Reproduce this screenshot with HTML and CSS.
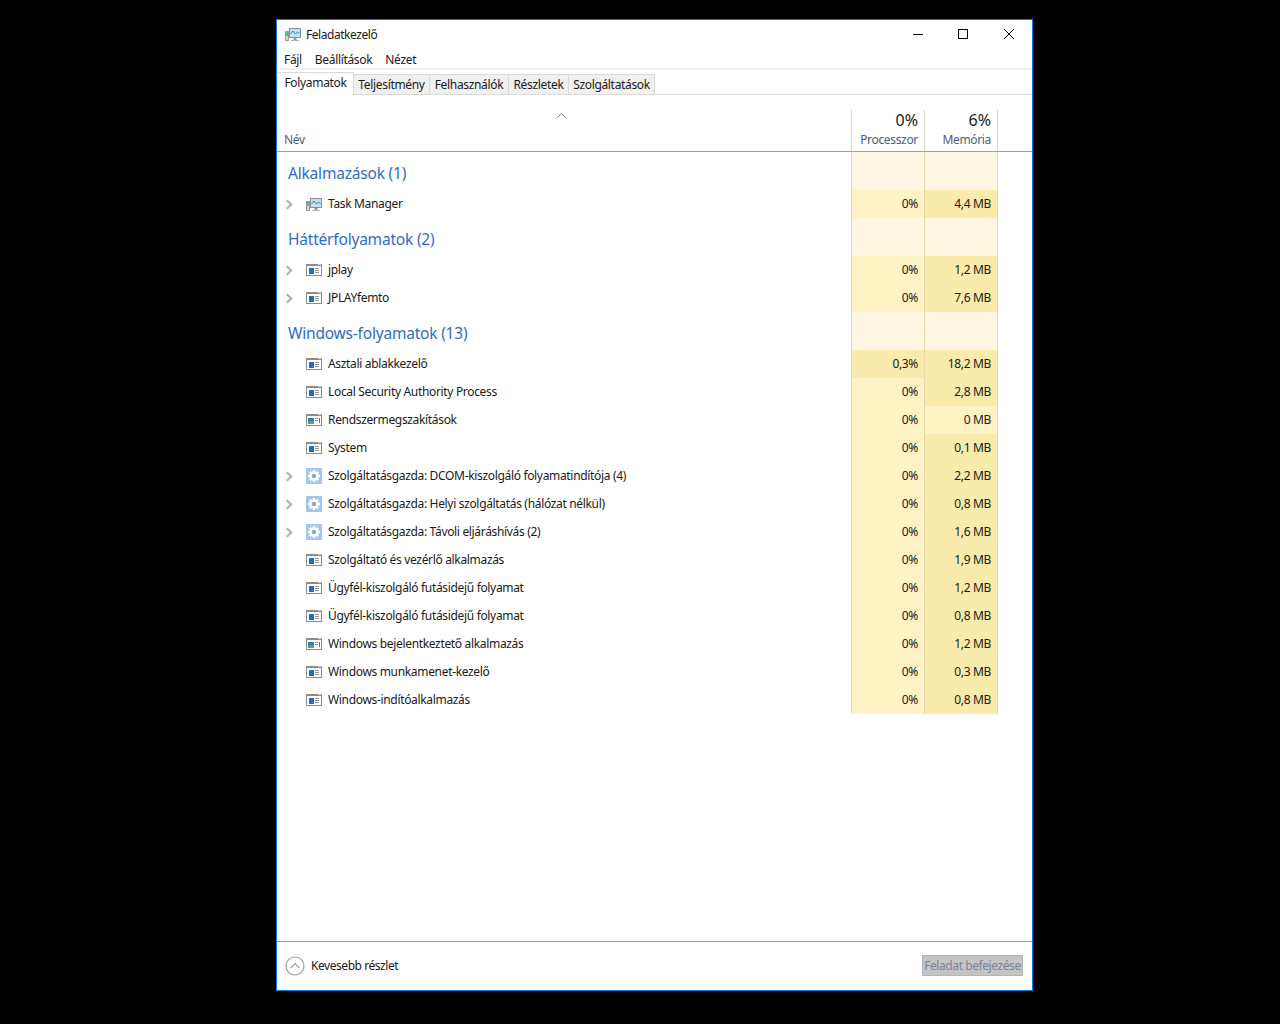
FILE: index.html
```html
<!DOCTYPE html>
<html lang="hu">
<head>
<meta charset="utf-8">
<title>Feladatkezelő</title>
<link rel="stylesheet" href="styles.css">
</head>
<body>
<svg class="defs" width="0" height="0" aria-hidden="true">
  <symbol id="i-proc" viewBox="0 0 16 12">
    <rect x="0" y="0" width="16" height="12" fill="#8c8c8c"/>
    <rect x="1" y="2" width="14" height="9" fill="#fff"/>
    <rect x="3" y="4" width="5" height="6" fill="#1e6fc4"/>
    <rect x="9" y="4" width="4" height="1" fill="#9a9a9a"/>
    <rect x="9" y="6" width="4" height="1" fill="#9a9a9a"/>
    <rect x="9" y="8" width="4" height="1" fill="#9a9a9a"/>
    <rect x="12" y="0" width="3" height="1" fill="#d8d8d8"/>
  </symbol>
  <symbol id="i-sys" viewBox="0 0 16 12">
    <rect x="0" y="0" width="16" height="12" fill="#8c8c8c"/>
    <rect x="1" y="2" width="14" height="9" fill="#fff"/>
    <rect x="2" y="4" width="6" height="3" fill="#2a7fb8"/>
    <rect x="2" y="7" width="6" height="3" fill="#4da87a"/>
    <rect x="9" y="4" width="3" height="1" fill="#9a9a9a"/>
    <rect x="9" y="6" width="3" height="1" fill="#9a9a9a"/>
    <rect x="13" y="4" width="1" height="5" fill="#3a8a5a"/>
    <rect x="12" y="0" width="3" height="1" fill="#d8d8d8"/>
  </symbol>
  <symbol id="i-gear" viewBox="0 0 16 16">
    <rect width="16" height="16" fill="#a3c8ee"/>
    <path d="M8 2v12M2 8h12M3.8 3.8l8.4 8.4M12.2 3.8l-8.4 8.4" stroke="#fff" stroke-width="2.4"/>
    <circle cx="8" cy="8" r="4.6" fill="#fff"/>
    <circle cx="8" cy="8" r="2.2" fill="#7aa8da"/>
  </symbol>
  <symbol id="i-tm" viewBox="0 0 16 16">
    <rect x="0" y="5" width="4" height="10" fill="#9a9a9a"/>
    <rect x="1" y="6" width="2" height="3" fill="#46c46a"/>
    <rect x="1" y="10" width="2" height="4" fill="#d6d6d6"/>
    <rect x="4.5" y="2.5" width="11" height="9" fill="#c4e0f6" stroke="#8f8f8f"/>
    <path d="M5.5 8l2.5-3 2.5 3 2-2 2 1.5" fill="none" stroke="#2a86d4"/>
    <rect x="8.5" y="12" width="3" height="2" fill="#9a9a9a"/>
    <rect x="6" y="14" width="8" height="1" fill="#b4b4b4"/>
  </symbol>
</svg>

<main class="window">
  <header class="titlebar">
    <svg class="app-icon"><use href="#i-tm"/></svg>
    <span class="title">Feladatkezelő</span>
    <div class="controls">
      <svg class="ctl" viewBox="0 0 46 26"><path d="M19 13.5h10" stroke="#000" fill="none"/></svg>
      <svg class="ctl" viewBox="0 0 46 26"><rect x="18.5" y="8.5" width="9" height="9" stroke="#000" fill="none"/></svg>
      <svg class="ctl" viewBox="0 0 46 26"><path d="M18 8l10 10M28 8L18 18" stroke="#000" fill="none"/></svg>
    </div>
  </header>
  <nav class="menubar"><span>Fájl</span><span>Beállítások</span><span>Nézet</span></nav>
  <div class="tabs">
    <span class="tab tab-active">Folyamatok</span>
    <span class="tab t2">Teljesítmény</span>
    <span class="tab t3">Felhasználók</span>
    <span class="tab t4">Részletek</span>
    <span class="tab t5">Szolgáltatások</span>
  </div>

  <div class="table">
    <div class="head">
      <div class="head-name">
        <svg class="sort" viewBox="0 0 9 5"><path d="M.5 4.5l4-4 4 4" fill="none" stroke="#7a7a7a"/></svg>
        <span class="label">Név</span>
      </div>
      <div class="head-col"><span class="pct">0%</span><span class="label">Processzor</span></div>
      <div class="head-col"><span class="pct">6%</span><span class="label">Memória</span></div>
    </div>

    <div class="row group"><div class="name">Alkalmazások (1)</div><div class="cell"></div><div class="cell"></div></div>
    <div class="row"><div class="name"><i class="chev"></i><svg class="ico16"><use href="#i-tm"/></svg><span>Task Manager</span></div><div class="cell h1">0%</div><div class="cell h2">4,4 MB</div></div>

    <div class="row group"><div class="name">Háttérfolyamatok (2)</div><div class="cell"></div><div class="cell"></div></div>
    <div class="row"><div class="name"><i class="chev"></i><svg class="ico"><use href="#i-proc"/></svg><span>jplay</span></div><div class="cell h1">0%</div><div class="cell h2">1,2 MB</div></div>
    <div class="row"><div class="name"><i class="chev"></i><svg class="ico"><use href="#i-proc"/></svg><span>JPLAYfemto</span></div><div class="cell h1">0%</div><div class="cell h2">7,6 MB</div></div>

    <div class="row group"><div class="name">Windows-folyamatok (13)</div><div class="cell"></div><div class="cell"></div></div>
    <div class="row"><div class="name"><i class="nochev"></i><svg class="ico"><use href="#i-proc"/></svg><span>Asztali ablakkezelő</span></div><div class="cell h2">0,3%</div><div class="cell h2">18,2 MB</div></div>
    <div class="row"><div class="name"><i class="nochev"></i><svg class="ico"><use href="#i-proc"/></svg><span>Local Security Authority Process</span></div><div class="cell h1">0%</div><div class="cell h2">2,8 MB</div></div>
    <div class="row"><div class="name"><i class="nochev"></i><svg class="ico"><use href="#i-sys"/></svg><span>Rendszermegszakítások</span></div><div class="cell h1">0%</div><div class="cell h1">0 MB</div></div>
    <div class="row"><div class="name"><i class="nochev"></i><svg class="ico"><use href="#i-proc"/></svg><span>System</span></div><div class="cell h1">0%</div><div class="cell h2">0,1 MB</div></div>
    <div class="row"><div class="name"><i class="chev"></i><svg class="ico16"><use href="#i-gear"/></svg><span>Szolgáltatásgazda: DCOM-kiszolgáló folyamatindítója (4)</span></div><div class="cell h1">0%</div><div class="cell h2">2,2 MB</div></div>
    <div class="row"><div class="name"><i class="chev"></i><svg class="ico16"><use href="#i-gear"/></svg><span>Szolgáltatásgazda: Helyi szolgáltatás (hálózat nélkül)</span></div><div class="cell h1">0%</div><div class="cell h2">0,8 MB</div></div>
    <div class="row"><div class="name"><i class="chev"></i><svg class="ico16"><use href="#i-gear"/></svg><span>Szolgáltatásgazda: Távoli eljáráshívás (2)</span></div><div class="cell h1">0%</div><div class="cell h2">1,6 MB</div></div>
    <div class="row"><div class="name"><i class="nochev"></i><svg class="ico"><use href="#i-proc"/></svg><span>Szolgáltató és vezérlő alkalmazás</span></div><div class="cell h1">0%</div><div class="cell h2">1,9 MB</div></div>
    <div class="row"><div class="name"><i class="nochev"></i><svg class="ico"><use href="#i-proc"/></svg><span>Ügyfél-kiszolgáló futásidejű folyamat</span></div><div class="cell h1">0%</div><div class="cell h2">1,2 MB</div></div>
    <div class="row"><div class="name"><i class="nochev"></i><svg class="ico"><use href="#i-proc"/></svg><span>Ügyfél-kiszolgáló futásidejű folyamat</span></div><div class="cell h1">0%</div><div class="cell h2">0,8 MB</div></div>
    <div class="row"><div class="name"><i class="nochev"></i><svg class="ico"><use href="#i-sys"/></svg><span>Windows bejelentkeztető alkalmazás</span></div><div class="cell h1">0%</div><div class="cell h2">1,2 MB</div></div>
    <div class="row"><div class="name"><i class="nochev"></i><svg class="ico"><use href="#i-proc"/></svg><span>Windows munkamenet-kezelő</span></div><div class="cell h1">0%</div><div class="cell h2">0,3 MB</div></div>
    <div class="row"><div class="name"><i class="nochev"></i><svg class="ico"><use href="#i-proc"/></svg><span>Windows-indítóalkalmazás</span></div><div class="cell h1">0%</div><div class="cell h2">0,8 MB</div></div>
  </div>

  <footer class="footer">
    <svg class="less" viewBox="0 0 20 20"><circle cx="10" cy="10" r="9" fill="#fff" stroke="#a0a0a0" stroke-width="1.2"/><path d="M5.5 12l4.5-4.5 4.5 4.5" fill="none" stroke="#a0a0a0" stroke-width="1.2"/></svg>
    <span class="less-label">Kevesebb részlet</span>
    <span class="end-btn">Feladat befejezése</span>
  </footer>
</main>
</body>
</html>
```

FILE: styles.css
```css
* { box-sizing: border-box; }
html, body { margin: 0; padding: 0; height: 100%; background: #000; }
body { font-family: "Noto Sans", "Open Sans", sans-serif; font-size: 12px; letter-spacing: -0.33px; color: #1a1a1a; padding: 19px 0 0 276px; }
.defs { display: block; height: 0; }

.window { width: 757px; height: 972px; background: #fff; border: 1px solid #0f7bd6; display: flex; flex-direction: column; }

.titlebar { height: 27px; display: flex; align-items: center; padding: 1px 0 0 8px; flex: none; }
.app-icon { width: 16px; height: 16px; margin-right: 5px; }
.title { flex: 1; letter-spacing: -0.45px; }
.controls { display: flex; height: 26px; }
.ctl { width: 46px; height: 26px; display: block; }

.menubar { height: 23px; flex: none; display: flex; gap: 13px; padding: 5px 0 0 7px; border-bottom: 2px solid #f0f0f0; line-height: 16px; }

.tabs { height: 25px; flex: none; display: flex; padding-top: 2px; border-bottom: 1px solid #d9d9d9; align-items: flex-end; }
.tab { height: 21px; margin-bottom: -1px; background: #f0f0f0; border: 1px solid #d9d9d9; border-left: 0; line-height: 20px; text-align: center; }
.tab-active { width: 77px; height: 23px; background: #fff; border-bottom: 0; line-height: 20px; padding-left: 1px; z-index: 1; }
.t2 { width: 76px; }
.t3 { width: 79px; }
.t4 { width: 60px; }
.t5 { width: 86px; }

.table { flex: 1; }
.head { display: grid; grid-template-columns: 575px 73px 73px; height: 57px; border-bottom: 1px solid #a0a0a0; }
.head-name { position: relative; padding: 22px 0 0 7px; border-right: 1px solid #d9d9d9; margin-top: 15px; }
.sort { position: absolute; left: 280px; top: 3px; width: 9px; height: 5px; }
.label { color: #4c607a; line-height: 16px; display: block; }
.head-col { display: flex; flex-direction: column; align-items: flex-end; padding: 0 6px 0 0; border-right: 1px solid #d9d9d9; margin-top: 15px; }
.pct { font-size: 16px; letter-spacing: 0; color: #1a1a1a; line-height: 20px; margin-bottom: 2px; }

.row { display: grid; grid-template-columns: 575px 73px 73px; height: 28px; }
.group { height: 38px; }
.name { display: flex; align-items: center; padding-left: 8px; white-space: nowrap; border-right: 1px solid #e8d9a6; }
.name span { padding-bottom: 2px; }
.group .name { font-size: 15.5px; letter-spacing: -0.2px; color: #2f6bc9; padding: 4px 0 0 11px; }
.chev { width: 7px; height: 7px; border-top: 2px solid #b0b0b0; border-right: 2px solid #b0b0b0; transform: rotate(45deg); margin: 0 15px 0 -1px; flex: none; }
.nochev { width: 21px; flex: none; }
.ico { width: 16px; height: 12px; margin-right: 6px; flex: none; }
.ico16 { width: 16px; height: 16px; margin-right: 6px; flex: none; }
.cell { border-right: 1px solid #e8d9a6; text-align: right; padding: 0 6px 0 0; line-height: 28px; background: #fdf6e2; }
.h1 { background: #fdf3c5; }
.h2 { background: #f9ebab; }

.footer { height: 49px; flex: none; border-top: 1px solid #a0a0a0; display: flex; align-items: center; padding: 0 9px 1px 8px; }
.less { width: 20px; height: 20px; margin-right: 6px; }
.less-label { flex: 1; letter-spacing: -0.45px; }
.end-btn { width: 101px; height: 21px; background: #c4c4c4; border: 1px solid #b4b4b4; color: #7a84a0; text-align: center; line-height: 19px; white-space: nowrap; letter-spacing: -0.42px; }
```
